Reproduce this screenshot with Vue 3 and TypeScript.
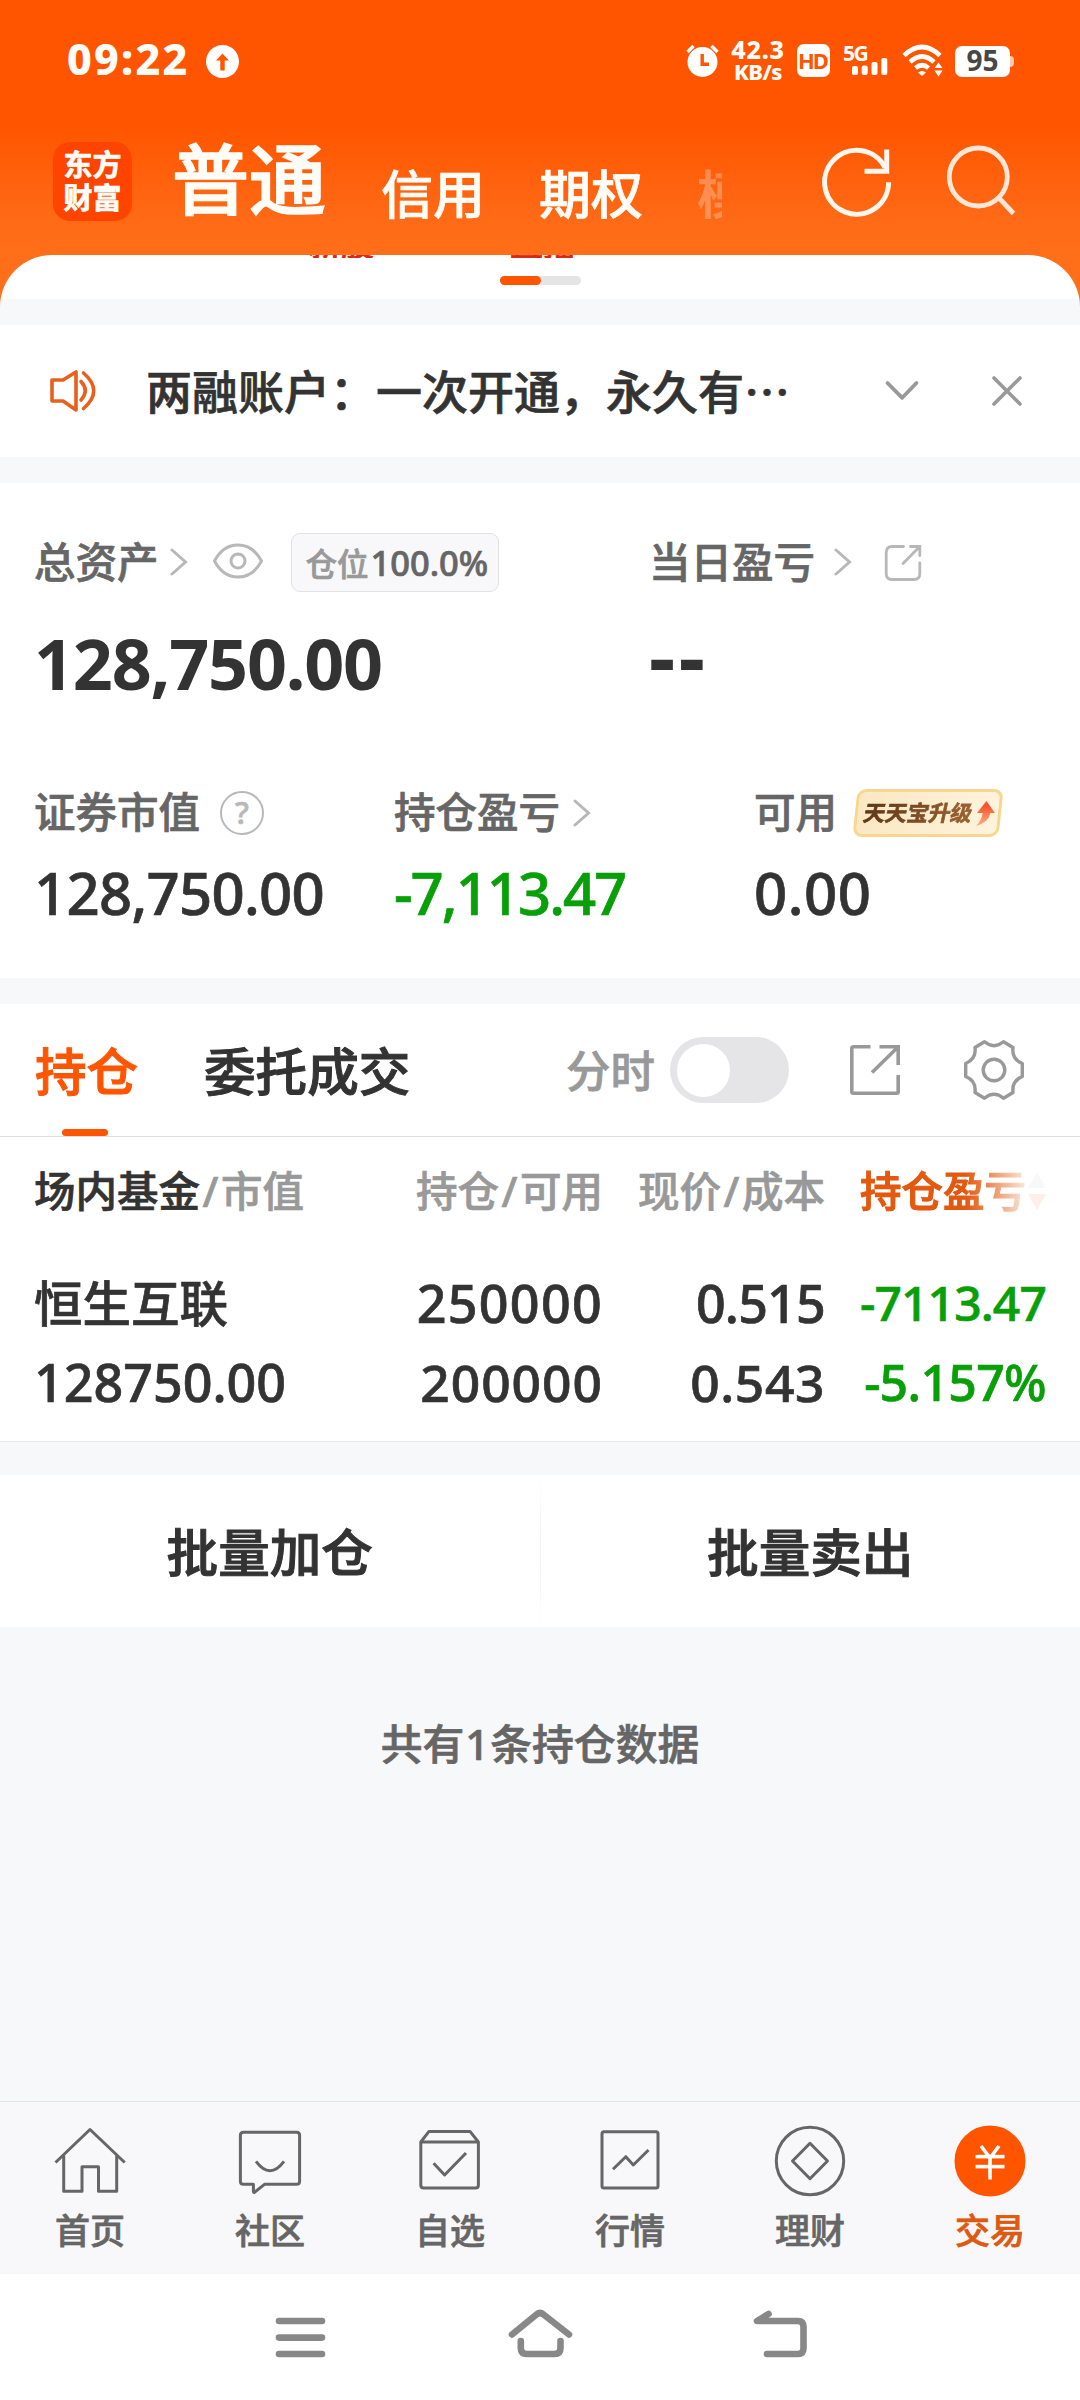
<script setup lang="ts">
interface NavItem {
  label: string
  paths: string[]
  circle?: boolean
  active?: boolean
}

const navItems: NavItem[] = [
  {
    label: '首页',
    paths: ['M1.5 37.5 36 4.5 70.7 37.5', 'M9.7 30.5V66.3H28V41.7H44.5V66.3H62.7V30.5'],
  },
  {
    label: '社区',
    paths: [
      'M9.4 7.3H62.6Q65.6 7.3 65.6 10.3V56.3Q65.6 59.3 62.6 59.3H30.5L20.5 67.3Q19.4 67.8 19.4 66V59.3H9.4Q6.4 59.3 6.4 56.3V10.3Q6.4 7.3 9.4 7.3Z',
      'M22 36.3Q36 55 50 36.3',
    ],
  },
  {
    label: '自选',
    paths: ['M6.8 17 15 6.4H56L64.4 17V60Q64.4 63 61.4 63H9.8Q6.8 63 6.8 60Z', 'M6.8 17H64.4', 'M19.6 38.3 30.6 50 52 28'],
  },
  {
    label: '行情',
    paths: ['M10 6.7H62Q64 6.7 64 8.7V61Q64 63 62 63H10Q8 63 8 61V8.7Q8 6.7 10 6.7Z', 'M19 44.3 31.8 31.7 39.3 40 54.5 25'],
  },
  {
    label: '理财',
    circle: true,
    paths: ['M36 18.3 53.5 36 36 53.7 18.5 36Z'],
  },
  {
    label: '交易',
    circle: true,
    active: true,
    paths: ['M27 21 36 33 45 21', 'M21.5 31.6H50.5', 'M21.5 41.6H50.5', 'M36 33V54.5'],
  },
]
</script>

<template>
  <div class="screen">
    <header class="top">
      <div class="status">
        <span class="time">09:22</span>
        <svg class="up" viewBox="0 0 33 33"><circle cx="16.5" cy="16.5" r="16.5" fill="#fff" /><path d="M16.5 8.5 23 15.5H18.7V25.5H14.3V15.5H10Z" fill="#ff5500" /></svg>
        <div class="grow"></div>
        <svg class="alarm" viewBox="0 0 33 33" fill="none" stroke="#fff">
          <circle cx="16.5" cy="18" r="15" fill="#fff" stroke="none" />
          <path d="M1.5 8 7.5 2M31.5 8 25.5 2" stroke-width="3.4" />
          <path d="M16.2 10V20.3H23" stroke="#ff5500" stroke-width="3.4" />
        </svg>
        <div class="speed"><span class="rate">42.3</span><span class="unit">KB/s</span></div>
        <span class="hd">HD</span>
        <div class="signal">
          <span class="gen">5G</span>
          <svg viewBox="0 0 36 17" fill="#fff"><rect x="0" y="8" width="6" height="9" rx="2" /><rect x="9.7" y="7.5" width="6" height="9.5" rx="2" /><rect x="19.5" y="4" width="6" height="13" rx="2" /><rect x="29.3" y="0" width="6" height="17" rx="2" /></svg>
        </div>
        <svg class="wifi" viewBox="0 0 42 33" fill="none" stroke="#fff" stroke-width="4.6">
          <path d="M2 11.5Q20 -5.5 38 11.5" />
          <path d="M8 18Q20 7 32 18" />
          <path d="M13.5 24Q20 18.5 26.5 24" />
          <path d="M16 28.5Q20 25.5 24 28.5L20 32Z" fill="#fff" stroke="none" />
          <path d="M32.5 24 36.5 18.5 40.5 24ZM32.5 26.5H40.5L36.5 32.5Z" fill="#fff" stroke="none" />
        </svg>
        <span class="battery">95</span><i class="nub"></i>
      </div>
      <div class="titlebar">
        <div class="logo"><span>东方</span><span>财富</span></div>
        <span class="main-tab">普通</span>
        <span class="sub-tab credit">信用</span>
        <span class="sub-tab option">期权</span>
        <span class="sub-tab faded">模</span>
        <svg class="refresh" viewBox="0 0 72 72" fill="none" stroke="#fff6ee" stroke-width="5">
          <path d="M68.6 37.3A32 32 0 1 1 65 22.5" />
          <path d="M66.7 4.4V26.3H44.5" />
        </svg>
        <svg class="search" viewBox="0 0 72 72" fill="none" stroke="#ffe6d6" stroke-width="4.8">
          <circle cx="33.3" cy="32" r="29" />
          <path d="M54 53 68.5 68.5" />
        </svg>
      </div>
    </header>

    <section class="sheet">
      <div class="peek"><span>新股</span><span>直播</span></div>
      <div class="pager"><i></i></div>
    </section>

    <section class="notice">
      <svg class="horn" viewBox="0 0 50 44" fill="none" stroke="#e8601c" stroke-width="3.6" stroke-linejoin="round" stroke-linecap="round">
        <path d="M3 11H14L27 3V41L14 32H3Z" />
        <path d="M32 12.5Q40.5 21.5 32 31" />
        <path d="M34.5 4Q55 21.5 34.5 39.5" />
      </svg>
      <span class="notice-text">两融账户：一次开通，永久有…</span>
      <svg class="fold" viewBox="0 0 36 24" fill="none" stroke="#999" stroke-width="3.8" stroke-linecap="round" stroke-linejoin="round"><path d="M3.5 4 18.2 18.8 32.5 4" /></svg>
      <svg class="close" viewBox="0 0 32 32" fill="none" stroke="#999" stroke-width="3.6" stroke-linecap="round"><path d="M3 3 29 29M29 3 3 29" /></svg>
    </section>

    <section class="assets">
      <div class="asset-head">
        <div class="total">
          <span class="label">总资产</span>
          <svg class="chev" viewBox="0 0 18 28"><path d="M2 2 15.5 14 2 26" /></svg>
          <svg class="eye" viewBox="0 0 52 36" fill="none" stroke="#b8b8b8" stroke-width="3">
            <path d="M2.5 18Q11 2 26 2T49.5 18Q41 34 26 34T2.5 18Z" stroke-linejoin="round" />
            <circle cx="26" cy="18" r="7" />
          </svg>
          <span class="badge">仓位<b>100.0%</b></span>
        </div>
        <span class="label">当日盈亏</span>
        <svg class="chev far" viewBox="0 0 18 28"><path d="M2 2 15.5 14 2 26" /></svg>
        <svg class="share" viewBox="0 0 38 38" fill="none" stroke="#b8b8b8" stroke-width="2.8" stroke-linecap="round">
          <path d="M19.5 2.5H8Q2.2 2.5 2.2 8.5V29.5Q2.2 35.5 8 35.5H30Q35.8 35.5 35.8 29.5V19" />
          <path d="M26.5 2.5H35.8V11.5M35.3 3 19 19.5" />
        </svg>
      </div>
      <div class="asset-big"><span class="total">128,750.00</span><span class="dashes">--</span></div>
      <div class="asset-grid">
        <div class="cell">
          <div class="cell-head">
            <span class="label">证券市值</span>
            <span class="help">?</span>
          </div>
          <div class="num n1">128,750.00</div>
        </div>
        <div class="cell">
          <div class="cell-head">
            <span class="label">持仓盈亏</span>
            <svg class="chev near" viewBox="0 0 18 28"><path d="M2 2 15.5 14 2 26" /></svg>
          </div>
          <div class="num n2 green">-7,113.47</div>
        </div>
        <div class="cell">
          <div class="cell-head">
            <span class="label">可用</span>
            <span class="tag">
              <span class="tag-text">天天宝升级</span>
              <svg viewBox="0 0 19 25"><defs><linearGradient id="rise" x1="0" y1="0" x2="0" y2="1"><stop offset="0.2" stop-color="#f9532f" /><stop offset="1" stop-color="#fbb183" /></linearGradient></defs><path d="M10.5 0 19 12H14.5Q12 22 0 25 6.5 18 6.7 12H1Z" fill="url(#rise)" /></svg>
            </span>
          </div>
          <div class="num n3">0.00</div>
        </div>
      </div>
    </section>

    <section class="tabs">
      <span class="tab on">持仓</span>
      <span class="tab second">委托成交</span>
      <span class="minute">分时</span>
      <span class="toggle"><i></i></span>
      <svg class="export" viewBox="0 0 50 50" fill="none" stroke="#999" stroke-width="3.6">
        <path d="M20.5 1.8H3.5Q1.8 1.8 1.8 3.5V46.5Q1.8 48.2 3.5 48.2H46.5Q48.2 48.2 48.2 46.5V30" />
        <path d="M29.5 1.8H48.2V20M48 2 22 27.5" />
      </svg>
      <svg class="gear" viewBox="0 0 60 60" fill="none" stroke="#999" stroke-width="3.4" stroke-linejoin="round">
        <path d="M20.500 1.800Q30 9.500 39.500 1.800L49 7.500Q47.500 19 58.300 23.500V36.500Q47.500 41 49 52.500L39.500 58.200Q30 50.500 20.500 58.200L11 52.500Q12.500 41 1.700 36.500V23.500Q12.500 19 11 7.500Z" />
        <circle cx="30" cy="30" r="10.8" />
      </svg>
    </section>

    <section class="table">
      <div class="row head">
        <span class="c1"><b>场内基金</b><i>/</i>市值</span>
        <span>持仓<i>/</i>可用</span>
        <span>现价<i>/</i>成本</span>
        <span class="sorted">持仓盈亏<svg viewBox="0 0 18 40"><path d="M9 1 18 17H0Z" fill="#bbb" /><path d="M0 23H18L9 39Z" fill="#f5622a" /></svg></span>
      </div>
      <div class="row first">
        <span class="c1 name">恒生互联</span>
        <span class="v1">250000</span>
        <span class="v2">0.515</span>
        <span class="v3 green">-7113.47</span>
      </div>
      <div class="row second">
        <span class="c1 w1">128750.00</span>
        <span class="w2">200000</span>
        <span class="w3">0.543</span>
        <span class="w4 green">-5.157%</span>
      </div>
    </section>

    <section class="batch">
      <button>批量加仓</button>
      <i></i>
      <button>批量卖出</button>
    </section>

    <p class="summary">共有<span>1</span>条持仓数据</p>

    <nav class="bottom">
      <div v-for="item in navItems" :key="item.label" class="item" :class="{ active: item.active }">
        <svg viewBox="0 0 72 72" fill="none" stroke-linejoin="round">
          <circle v-if="item.circle" class="disc" cx="36" cy="36" r="33.7" />
          <path v-for="d in item.paths" :key="d" :d="d" />
        </svg>
        <span>{{ item.label }}</span>
      </div>
    </nav>

    <div class="system">
      <svg viewBox="0 0 1080 126" fill="none" stroke="#888" stroke-width="6.6" stroke-linecap="round" stroke-linejoin="round">
        <path d="M279 47H322M279 63.6H322M279 80H322" />
        <path d="M512 60.5 536.5 40.5Q540 37.5 543.5 40.5L569 60.5M520.8 67V74Q520.8 80 526.8 80H554.5Q560.5 80 560.5 74V67" />
        <path d="M768.5 40 757 47H798Q803.5 47 803.5 53V74Q803.5 80 798 80H767" />
      </svg>
    </div>
  </div>
</template>

<style>
body {
  margin: 0;
  background: #f7f8fa;
}
</style>

<style scoped>
.screen {
  width: 1080px;
  height: 2400px;
  overflow: hidden;
  display: flex;
  flex-direction: column;
  background: linear-gradient(#ff6e19 0 320px, #f7f8fa 320px);
  font-family: "Noto Sans", "Noto Sans CJK SC", sans-serif;
  font-weight: 500;
  color: #333;
  white-space: nowrap;
  -webkit-text-stroke: 0.7px currentColor;
}
svg {
  display: block;
  flex: none;
}
i, b {
  font-style: normal;
}
span {
  flex: none;
}
.green {
  color: #089f08;
}

.top {
  height: 255px;
  flex: none;
  color: #fffdf8;
  background: linear-gradient(#ff5500 0, #ff5500 125px, #ff6a16 220px, #ff6e19 255px);
}
.status {
  display: flex;
  align-items: center;
  height: 120px;
  padding-left: 67px;
  padding-right: 66px;
  -webkit-text-stroke: 0;
}
.time {
  font-size: 43px;
  line-height: 60px;
  font-weight: 800;
  letter-spacing: 2.2px;
  width: 139px;
  margin-top: -2px;
}
.up {
  width: 33px;
  height: 33px;
  margin-top: 2px;
}
.grow {
  flex: 1;
}
.alarm {
  width: 33px;
  height: 33px;
  margin-right: 12px;
}
.speed {
  display: flex;
  flex-direction: column;
  align-items: center;
  width: 54px;
  margin-right: 12px;
  margin-top: -2px;
  font-weight: 800;
}
.rate {
  font-size: 25px;
  line-height: 24px;
  letter-spacing: 0.8px;
}
.unit {
  font-size: 22px;
  line-height: 20px;
  letter-spacing: -0.5px;
}
.hd {
  width: 33px;
  height: 33px;
  border-radius: 7px;
  background: #fff;
  color: #ff5500;
  font-size: 22px;
  font-weight: 700;
  line-height: 32px;
  text-align: center;
  letter-spacing: -2px;
  text-indent: -2px;
  margin-right: 13px;
}
.signal {
  width: 46px;
  margin-right: 13px;
}
.gen {
  display: block;
  font-size: 21px;
  font-weight: 700;
  line-height: 14px;
  letter-spacing: -1.5px;
  height: 12px;
}
.signal svg {
  width: 36px;
  height: 17px;
  margin-left: 9px;
}
.wifi {
  width: 42px;
  height: 33px;
  margin-right: 11px;
}
.battery {
  width: 55px;
  height: 31px;
  border-radius: 7px;
  background: #fff;
  color: #474747;
  font-size: 28px;
  line-height: 29px;
  font-weight: 700;
  text-align: center;
  margin-top: 3px;
}
.nub {
  width: 4px;
  height: 11px;
  margin-top: 3px;
  border-radius: 0 4px 4px 0;
  background: #ffc9ac;
}
.titlebar {
  display: flex;
  align-items: center;
  height: 122px;
  padding-left: 53px;
}
.logo {
  width: 79px;
  height: 79px;
  border-radius: 17px;
  background: #ff4400;
  display: flex;
  flex-direction: column;
  align-items: center;
  justify-content: center;
  font-size: 29px;
  line-height: 33px;
  font-weight: 700;
}
.main-tab {
  font-size: 77px;
  line-height: 90px;
  margin-left: 40px;
  margin-top: -3px;
  width: 209px;
  -webkit-text-stroke: 1.6px currentColor;
}
.sub-tab {
  font-size: 52px;
  line-height: 60px;
  margin-top: 26px;
}
.credit {
  width: 158px;
}
.option {
  width: 158px;
}
.faded {
  width: 25px;
  overflow: hidden;
  opacity: 0.28;
}
.refresh {
  width: 72px;
  height: 72px;
  margin-left: 98px;
}
.search {
  width: 72px;
  height: 72px;
  margin-left: 53px;
  margin-top: 0;
}

.sheet {
  flex: none;
  height: 70px;
  border-radius: 52px 52px 0 0;
  overflow: hidden;
  background: linear-gradient(#fff 0 44px, #f7f8fa 44px);
}
.peek {
  display: flex;
  align-items: flex-end;
  gap: 136px;
  height: 3px;
  overflow: hidden;
  padding-left: 308px;
  color: #d42a17;
  font-size: 33px;
  line-height: 36px;
}
.peek span {
  margin-bottom: -4px;
}
.pager {
  width: 81px;
  height: 9px;
  margin: 18px auto 0;
  border-radius: 5px;
  background: #e5e5e5;
}
.pager i {
  display: block;
  width: 41px;
  height: 9px;
  border-radius: 5px;
  background: #ff5500;
}

.notice {
  flex: none;
  display: flex;
  align-items: center;
  height: 132px;
  background: #fff;
  padding-left: 49px;
}
.horn {
  width: 50px;
  height: 44px;
  margin-right: 47px;
}
.notice-text {
  font-family: "Noto Sans CJK SC", sans-serif;
  font-size: 46px;
  line-height: 60px;
  width: 738px;
  margin-top: -4px;
}
.fold {
  width: 36px;
  height: 24px;
}
.close {
  width: 32px;
  height: 32px;
  margin-left: 71px;
}

.assets {
  flex: none;
  box-sizing: border-box;
  height: 495px;
  margin-top: 26px;
  padding: 50px 0 0 34px;
  background: #fff;
}
.asset-head, .total {
  display: flex;
  align-items: center;
}
.total {
  width: 615px;
}
.label {
  font-size: 41.5px;
  line-height: 48px;
  color: #666;
  margin-top: -2px;
}
.chev {
  width: 18px;
  height: 28px;
  margin-left: 11px;
  margin-top: -1px;
  fill: none;
  stroke: #b8b8b8;
  stroke-width: 3;
  stroke-linecap: round;
}
.chev.far {
  margin-left: 19px;
}
.chev.near {
  margin-left: 13px;
}
.eye {
  width: 52px;
  height: 36px;
  margin-left: 24px;
  margin-top: -3px;
}
.badge {
  box-sizing: border-box;
  width: 208px;
  height: 59px;
  margin-left: 27px;
  padding-left: 14px;
  border: 1px solid #e2e2e4;
  border-radius: 9px;
  background: #f8f8fa;
  color: #999;
  font-size: 31.5px;
  line-height: 57px;
}
.badge b {
  color: #666;
  font-size: 34.5px;
  font-weight: 500;
  margin-left: 2px;
}
.share {
  width: 38px;
  height: 38px;
  margin-left: 32px;
}
.asset-big {
  display: flex;
  margin-top: 36px;
  font-size: 70px;
  line-height: 70px;
  font-weight: 700;
  letter-spacing: -1.2px;
  -webkit-text-stroke: 0;
}
.dashes {
  font-size: 82px;
  letter-spacing: 3.5px;
  margin-top: -8px;
}
.asset-grid {
  display: grid;
  grid-template-columns: 360px 360px 1fr;
  margin-top: 91px;
}
.cell-head {
  display: flex;
  align-items: center;
  height: 48px;
}
.help {
  box-sizing: border-box;
  width: 44px;
  height: 44px;
  margin-left: 20px;
  border: 2.6px solid #b8b8b8;
  border-radius: 50%;
  color: #b8b8b8;
  font-size: 31px;
  line-height: 38px;
  text-align: center;
}
.num {
  margin-top: 26px;
  font-size: 58px;
  line-height: 60px;
}
.n1 {
  letter-spacing: -0.7px;
}
.n2 {
  letter-spacing: -2px;
}
.n3 {
  letter-spacing: 0.5px;
}
.tag {
  box-sizing: border-box;
  display: flex;
  align-items: center;
  width: 146px;
  height: 48px;
  margin-left: 18px;
  padding-left: 6px;
  border: 3px solid #f7d78d;
  border-radius: 9px;
  background: linear-gradient(90deg, #fbe8c3, #fff3dc);
  transform: skewX(-6deg);
}
.tag-text {
  font-size: 21.7px;
  line-height: 30px;
  font-weight: 700;
  transform: skewX(-6deg);
  color: transparent;
  background: linear-gradient(90deg, #5f3618, #9b6231);
  background-clip: text;
}
.tag svg {
  width: 19px;
  height: 25px;
  margin-left: 4px;
  transform: skewX(6deg);
}

.tabs {
  flex: none;
  box-sizing: border-box;
  display: flex;
  align-items: center;
  height: 133px;
  margin-top: 26px;
  padding-left: 35px;
  border-bottom: 1px solid #dedede;
  background: #fff;
}
.tab {
  position: relative;
  font-size: 51.6px;
  line-height: 60px;
  margin-top: 1px;
  -webkit-text-stroke: 1px currentColor;
}
.on {
  width: 169px;
  color: #ff5500;
}
.on::after {
  content: "";
  position: absolute;
  left: 27px;
  bottom: -35px;
  width: 46px;
  height: 7px;
  border-radius: 4px;
  background: #ff5500;
}
.second.tab {
  width: 362px;
}
.minute {
  font-size: 44.5px;
  line-height: 60px;
  color: #999;
  margin-top: 1px;
  width: 104px;
}
.toggle {
  box-sizing: border-box;
  width: 119px;
  height: 66px;
  padding: 6.5px;
  border-radius: 33px;
  background: #e5e5e7;
}
.toggle i {
  display: block;
  width: 53px;
  height: 53px;
  border-radius: 50%;
  background: #fff;
}
.export {
  width: 50px;
  height: 50px;
  margin-left: 61px;
}
.gear {
  width: 60px;
  height: 60px;
  margin-left: 64px;
}

.table {
  flex: none;
  box-sizing: border-box;
  height: 305px;
  padding: 24px 0 0 34px;
  border-bottom: 1px solid #e8e8e8;
  background: #fff;
}
.row {
  display: grid;
  grid-template-columns: 368px 201px 222px 221px;
  height: 60px;
  line-height: 60px;
  text-align: right;
}
.row .c1 {
  text-align: left;
}
.head {
  font-size: 41.5px;
  color: #999;
}
.head b {
  color: #333;
  font-weight: 500;
}
.head i {
  margin: 0 2.5px;
}
.sorted {
  display: flex;
  align-items: center;
  justify-content: flex-end;
  color: #e2590f;
  mask-image: linear-gradient(90deg, #000 0 140px, rgba(0, 0, 0, 0.75) 160px, rgba(0, 0, 0, 0.1) 204px);
  -webkit-text-stroke: 1.1px currentColor;
}
.sorted svg {
  width: 18px;
  height: 40px;
  margin-left: 2px;
}
.first {
  margin-top: 52px;
}
.second.row {
  margin-top: 19px;
}
.name {
  font-size: 48.5px;
}
.v1, .v2, .w1 {
  font-size: 52px;
}
.w2, .w3 {
  font-size: 51.5px;
}
.v1 {
  letter-spacing: 1.3px;
}
.v2 {
  letter-spacing: -0.8px;
}
.v3 {
  font-size: 48px;
  letter-spacing: -0.9px;
}
.w2 {
  letter-spacing: 1px;
}
.w3 {
  letter-spacing: 0.6px;
}
.w4 {
  font-size: 50px;
  letter-spacing: -0.7px;
}

.batch {
  flex: none;
  display: flex;
  align-items: center;
  height: 152px;
  margin-top: 33px;
  background: #fff;
}
.batch button {
  flex: 1;
  height: 152px;
  padding: 2px 0 0;
  border: 0;
  background: none;
  color: #333;
  font: 500 51.6px/60px "Noto Sans", "Noto Sans CJK SC", sans-serif;
  -webkit-text-stroke: 1px currentColor;
}
.batch i {
  width: 1px;
  height: 152px;
  background: linear-gradient(#fff, #f0f0f0, #fff);
}
.summary {
  flex: none;
  height: 60px;
  margin: 87px 0 0;
  text-align: center;
  font-size: 41.8px;
  line-height: 60px;
  color: #666;
}
.summary span {
  margin: 0 1px;
}

.bottom {
  flex: none;
  box-sizing: border-box;
  display: flex;
  height: 173px;
  margin-top: auto;
  padding-top: 23px;
  border-top: 1px solid #e4e4e6;
  background: #f8f8fa;
}
.item {
  width: 180px;
  display: flex;
  flex-direction: column;
  align-items: center;
  color: #666;
  font-size: 35px;
  line-height: 40px;
}
.item svg {
  width: 72px;
  height: 72px;
  margin-bottom: 14px;
  stroke: #666;
  stroke-width: 3;
}
.active {
  color: #dc5a12;
}
.active svg {
  stroke: #fff;
  stroke-width: 3.6;
}
.active .disc {
  fill: #ff5500;
  stroke: #ff5500;
}
.system {
  flex: none;
  height: 126px;
  background: #fff;
}
.system svg {
  width: 1080px;
  height: 126px;
}
</style>
